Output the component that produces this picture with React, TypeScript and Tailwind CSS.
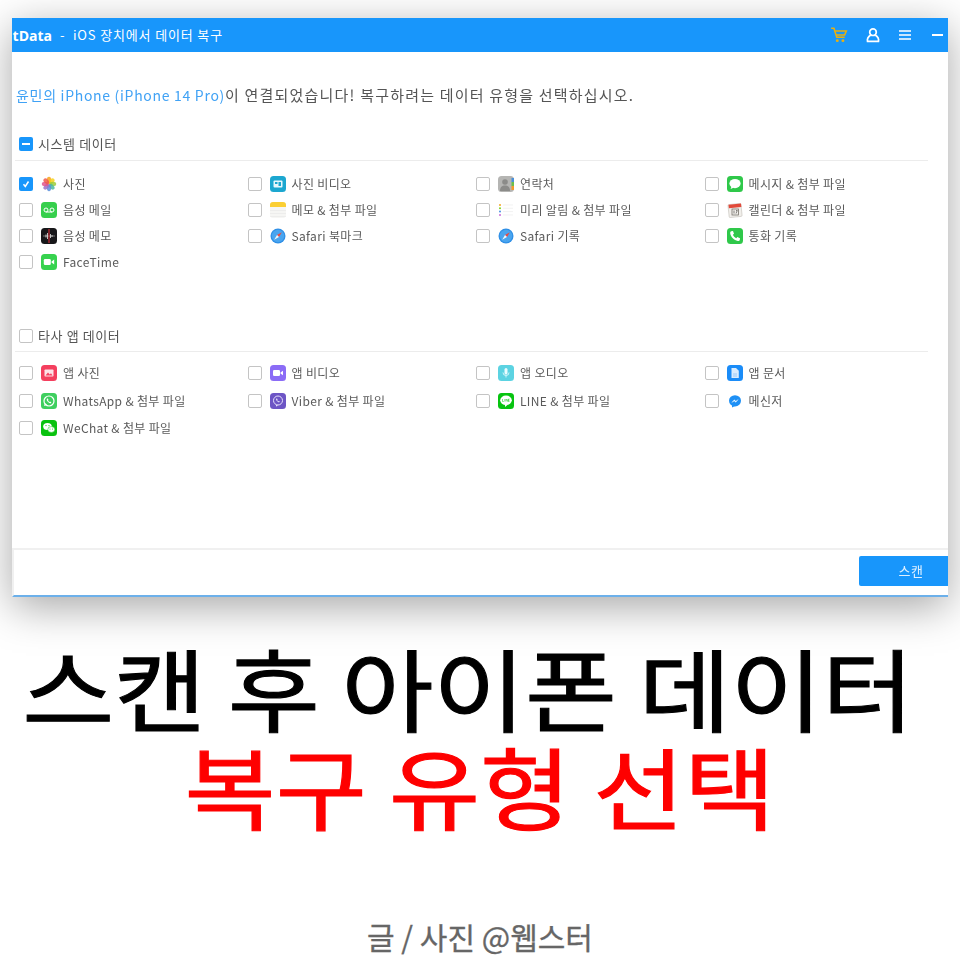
import React from "react";

type IconName =
  | "photos" | "photoVideo" | "contacts" | "messages"
  | "voicemail" | "notes" | "reminders" | "calendar"
  | "voiceMemo" | "safari" | "phone" | "facetime"
  | "appPhoto" | "appVideo" | "appAudio" | "appDoc"
  | "whatsapp" | "viber" | "line" | "messenger" | "wechat";

const AppIcon: React.FC<{ name: IconName }> = ({ name }) => {
  const tile = (fill: string) => <rect x="0" y="0" width="16" height="16" rx="3.5" fill={fill} />;
  let body: React.ReactNode = null;
  switch (name) {
    case "photos":
      body = (
        <g>
          {[
            ["#f9a11b", 0], ["#f7d21c", 45], ["#9ccb3b", 90], ["#4cb8a0", 135],
            ["#5a8fdc", 180], ["#9b72c8", 225], ["#e2558d", 270], ["#ef5b4c", 315],
          ].map(([c, a]) => (
            <ellipse key={String(a)} cx="8" cy="4.2" rx="2.2" ry="3.4" fill={String(c)} opacity="0.85" transform={`rotate(${a} 8 8)`} />
          ))}
        </g>
      );
      break;
    case "photoVideo":
      body = (
        <g>
          {tile("#1ca7d0")}
          <rect x="3.5" y="4.5" width="9" height="7" rx="1" fill="#e6f7fc" />
          <rect x="5" y="6" width="2.5" height="2" fill="#1ca7d0" />
          <rect x="8.5" y="6" width="2.5" height="4" fill="#1ca7d0" />
        </g>
      );
      break;
    case "contacts":
      body = (
        <g>
          {tile("#b5b5b3")}
          <circle cx="7" cy="6" r="2.8" fill="#8b8b89" />
          <path d="M2 15c0-4 2-5.5 5-5.5s5 1.500 5 5.500z" fill="#8b8b89" />
          <rect x="13.500" y="2" width="2.500" height="4" fill="#4a90d9" />
          <rect x="13.500" y="6" width="2.500" height="4" fill="#6cbf4b" />
          <rect x="13.500" y="10" width="2.500" height="4" fill="#f29a2e" />
        </g>
      );
      break;
    case "messages":
      body = (
        <g>
          {tile("#2fc84a")}
          <ellipse cx="8" cy="7.600" rx="5.600" ry="4.600" fill="#fff" />
          <path d="M4.500 10.500 L3.600 13 L7 11.600z" fill="#fff" />
        </g>
      );
      break;
    case "voicemail":
      body = (
        <g>
          {tile("#36cf4c")}
          <circle cx="5" cy="8" r="2" fill="none" stroke="#fff" strokeWidth="1" />
          <circle cx="11" cy="8" r="2" fill="none" stroke="#fff" strokeWidth="1" />
          <path d="M5 10h6" stroke="#fff" strokeWidth="1" />
        </g>
      );
      break;
    case "notes":
      body = (
        <g>
          <rect x="0" y="0" width="16" height="16" rx="3" fill="#f6f6f4" />
          <path d="M0 5V3a3 3 0 0 1 3-3h10a3 3 0 0 1 3 3v2z" fill="#fbcf33" />
          <path d="M0 8.500h16M0 11.500h16M0 14.500h16" stroke="#e4e4e4" strokeWidth="0.500" />
        </g>
      );
      break;
    case "reminders":
      body = (
        <g>
          <rect x="0" y="0" width="16" height="16" fill="#fff" />
          <circle cx="2" cy="3" r="1" fill="#f5a623" />
          <circle cx="2" cy="6.300" r="1" fill="#7ed321" />
          <circle cx="2" cy="9.600" r="1" fill="#4a90e2" />
          <circle cx="2" cy="13" r="1" fill="#c86dd7" />
          <path d="M5 3h10M5 6.300h10M5 9.600h10M5 13h10" stroke="#ececec" strokeWidth="0.700" />
        </g>
      );
      break;
    case "calendar":
      body = (
        <g>
          <rect x="1.500" y="2" width="13" height="13" rx="1" fill="#f1efeb" stroke="#b9b5ae" strokeWidth="0.500" transform="rotate(-6 8 8)" />
          <path d="M1.500 2.800 L14 1.500 L14.400 5 L1.900 6.300z" fill="#e24a3b" />
          <rect x="5" y="7" width="6.500" height="6" fill="none" stroke="#77736c" strokeWidth="0.800" />
          <path d="M7 8.500v3M9 8.500h1.300L9 11.500" stroke="#55524d" strokeWidth="0.700" fill="none" />
        </g>
      );
      break;
    case "voiceMemo":
      body = (
        <g>
          {tile("#17171a")}
          <path d="M2 8h12" stroke="#777" strokeWidth="1" />
          <path d="M5 6.500v3M6.500 5v6M9.500 6v4M11 7v2" stroke="#e8e8e8" strokeWidth="0.800" />
          <path d="M8 1v14" stroke="#e8303a" strokeWidth="1" />
        </g>
      );
      break;
    case "safari":
      body = (
        <g>
          <circle cx="8" cy="8" r="7.500" fill="#2f8fe6" />
          <circle cx="8" cy="8" r="6.200" fill="#4aa5ef" />
          <path d="M11.800 4.200 L9 9 L7 7z" fill="#f0483e" />
          <path d="M4.200 11.800 L7 7 L9 9z" fill="#f4f6f8" />
        </g>
      );
      break;
    case "phone":
      body = (
        <g>
          {tile("#2fc84a")}
          <path d="M4.300 3.200 L6 3 L7 5.800 L5.900 6.800 C6.500 8.300 7.700 9.600 9.300 10.200 L10.300 9.100 L13 10.200 L12.800 11.900 C12.500 12.700 11.600 13 10.800 12.900 C7 12.200 3.900 9.100 3.200 5.300 C3.100 4.400 3.500 3.600 4.300 3.200z" fill="#fff" />
        </g>
      );
      break;
    case "facetime":
      body = (
        <g>
          {tile("#37d24e")}
          <rect x="2.800" y="5" width="7" height="6" rx="1.300" fill="#fff" />
          <path d="M10.500 7.500 L13.200 5.500v5 L10.500 8.500z" fill="#fff" />
        </g>
      );
      break;
    case "appPhoto":
      body = (
        <g>
          {tile("#f43f5e")}
          <rect x="3.500" y="4.500" width="9" height="7" rx="0.800" fill="#fde2e7" />
          <path d="M4.500 10.500 L7 7.500 L8.800 9.500 L10 8.300 L11.500 10.500z" fill="#f43f5e" />
        </g>
      );
      break;
    case "appVideo":
      body = (
        <g>
          {tile("#8b6cf6")}
          <rect x="3" y="5" width="7" height="6" rx="1.300" fill="#fff" />
          <path d="M10.500 7.500 L13 5.800v4.400 L10.500 8.500z" fill="#fff" />
        </g>
      );
      break;
    case "appAudio":
      body = (
        <g>
          {tile("#5cd3e2")}
          <rect x="6.500" y="3" width="3" height="6.500" rx="1.500" fill="#eafcff" />
          <path d="M5 7.500a3 3 0 0 0 6 0M8 10.500v2" stroke="#eafcff" strokeWidth="0.800" fill="none" />
        </g>
      );
      break;
    case "appDoc":
      body = (
        <g>
          {tile("#1a8cf8")}
          <path d="M4.500 3h4.500l2.800 2.800V13h-7.300z" fill="#d9ecfe" />
          <path d="M6 9h4M6 11h4" stroke="#8cc3f9" strokeWidth="0.800" />
        </g>
      );
      break;
    case "whatsapp":
      body = (
        <g>
          {tile("#3fcf5f")}
          <circle cx="8" cy="8" r="5" fill="none" stroke="#fff" strokeWidth="1.200" />
          <path d="M3 13 L3.900 10 L6 12z" fill="#fff" />
          <path d="M6.200 5.600c-.7.600-.6 1.600.2 2.700s1.900 1.900 2.800 1.900c.7 0 1.100-.5 1.100-1l-1.300-.7-.6.500c-.6-.3-1.100-.8-1.400-1.400l.5-.6-.7-1.400z" fill="#fff" />
        </g>
      );
      break;
    case "viber":
      body = (
        <g>
          {tile("#6d55c5")}
          <circle cx="8" cy="7.500" r="4.500" fill="none" stroke="#e6e0fa" strokeWidth="1" />
          <path d="M6 12 L6 13.800 L8 12z" fill="#e6e0fa" />
          <path d="M6.300 5.500c-.5.500-.3 1.400.4 2.300s1.500 1.500 2.200 1.500c.6 0 .9-.4.900-.8l-1-.6-.5.400c-.5-.2-.9-.7-1.100-1.100l.4-.5-.5-1.200z" fill="#e6e0fa" />
        </g>
      );
      break;
    case "line":
      body = (
        <g>
          {tile("#07c410")}
          <ellipse cx="8" cy="7.300" rx="5.800" ry="4.800" fill="#fff" />
          <path d="M7 11.500 L7 14 L10 11.500z" fill="#fff" />
          <path d="M4.500 6v2.500h1.300M6.800 6v2.500M8 8.500V6l1.800 2.500V6M11.500 6h-1v2.500h1M10.500 7.200h1" stroke="#07c410" strokeWidth="0.500" fill="none" />
        </g>
      );
      break;
    case "messenger":
      body = (
        <g>
          <ellipse cx="8" cy="7.800" rx="6" ry="5.600" fill="#1e90f5" />
          <path d="M5 12 L5 14.500 L8 13z" fill="#1e90f5" />
          <path d="M4.800 9.500 L7.300 6.800 L8.800 8.200 L11.200 6.500 L8.800 9.300 L7.200 7.900z" fill="#fff" stroke="#fff" strokeWidth="0.300" />
        </g>
      );
      break;
    case "wechat":
      body = (
        <g>
          {tile("#09c20f")}
          <ellipse cx="6.500" cy="6.500" rx="4.300" ry="3.500" fill="#fff" />
          <ellipse cx="10.300" cy="9.500" rx="3.500" ry="2.900" fill="#fff" stroke="#09c20f" strokeWidth="0.500" />
          <circle cx="5" cy="5.600" r="0.600" fill="#09c20f" />
          <circle cx="8" cy="5.600" r="0.600" fill="#09c20f" />
          <circle cx="9" cy="9" r="0.500" fill="#09c20f" />
          <circle cx="11.500" cy="9" r="0.500" fill="#09c20f" />
        </g>
      );
      break;
  }
  return (
    <svg width="16" height="16" viewBox="0 0 16 16" className="shrink-0">
      {body}
    </svg>
  );
};

const Check: React.FC<{ state?: "off" | "on" | "mixed" }> = ({ state = "off" }) => {
  if (state === "off") {
    return <span className="block w-[14px] h-[14px] shrink-0 rounded-[2px] border border-[#c4c4c4] bg-white" />;
  }
  return (
    <span className="flex items-center justify-center w-[14px] h-[14px] shrink-0 rounded-[2px] bg-[#1896fb]">
      {state === "on" ? (
        <svg width="10" height="10" viewBox="0 0 10 10">
          <path d="M2.500 5.300 L4.300 7.500 L7.500 2.500" stroke="#fff" strokeWidth="1.500" fill="none" />
        </svg>
      ) : (
        <span className="block w-[8px] h-[2px] bg-white" />
      )}
    </span>
  );
};

type Item = { icon: IconName; label: string; checked?: boolean };

const systemItems: Item[] = [
  { icon: "photos", label: "사진", checked: true },
  { icon: "photoVideo", label: "사진 비디오" },
  { icon: "contacts", label: "연락처" },
  { icon: "messages", label: "메시지 & 첨부 파일" },
  { icon: "voicemail", label: "음성 메일" },
  { icon: "notes", label: "메모 & 첨부 파일" },
  { icon: "reminders", label: "미리 알림 & 첨부 파일" },
  { icon: "calendar", label: "캘린더 & 첨부 파일" },
  { icon: "voiceMemo", label: "음성 메모" },
  { icon: "safari", label: "Safari 북마크" },
  { icon: "safari", label: "Safari 기록" },
  { icon: "phone", label: "통화 기록" },
  { icon: "facetime", label: "FaceTime" },
];

const appItems: Item[] = [
  { icon: "appPhoto", label: "앱 사진" },
  { icon: "appVideo", label: "앱 비디오" },
  { icon: "appAudio", label: "앱 오디오" },
  { icon: "appDoc", label: "앱 문서" },
  { icon: "whatsapp", label: "WhatsApp & 첨부 파일" },
  { icon: "viber", label: "Viber & 첨부 파일" },
  { icon: "line", label: "LINE & 첨부 파일" },
  { icon: "messenger", label: "메신저" },
  { icon: "wechat", label: "WeChat & 첨부 파일" },
];

const ItemGrid: React.FC<{ items: Item[]; rowClass: string }> = ({ items, rowClass }) => (
  <div className={`grid grid-cols-[228.500px_228.500px_228.500px_1fr] pl-[7px] ${rowClass}`}>
    {items.map((item) => (
      <div key={item.icon + item.label} className="flex items-center h-[16px]">
        <Check state={item.checked ? "on" : "off"} />
        <span className="ml-[8px]">
          <AppIcon name={item.icon} />
        </span>
        <span className="ml-[6px] text-[12px] text-[#5a5a5a] tracking-[0.35px] whitespace-nowrap">{item.label}</span>
      </div>
    ))}
  </div>
);

const App: React.FC = () => {
  return (
    <div className="w-[960px] h-[960px] bg-white overflow-hidden flex flex-col items-center font-['Noto_Sans_CJK_KR','Noto_Sans',sans-serif]">
      <div className="mt-[18px] w-[936px] h-[579px] shrink-0 flex flex-col bg-white shadow-[0_10px_40px_rgba(0,0,0,0.35)] blur-[0.6px]">
        {/* title bar */}
        <div className="h-[34px] shrink-0 bg-[#1896fb] flex items-center text-white overflow-hidden">
          <span className="text-[14px] font-bold whitespace-nowrap w-[40px] flex justify-end overflow-hidden font-['Open_Sans',sans-serif]">tData</span>
          <span className="ml-[8px] text-[13px] tracking-[0.85px] whitespace-nowrap">-&nbsp; iOS 장치에서 데이터 복구</span>
          <div className="ml-auto flex items-center">
            <svg width="18" height="18" viewBox="0 0 16 16" className="mr-[17px]">
              <path d="M1 2h2.500l2.500 8h7M4 4.500h10.500L13 8H5" stroke="#e8b010" strokeWidth="1.400" fill="none" />
              <circle cx="6.500" cy="13" r="1.300" fill="#e8b010" />
              <circle cx="11.500" cy="13" r="1.300" fill="#e8b010" />
            </svg>
            <svg width="16" height="16" viewBox="0 0 16 16" className="mr-[18px]">
              <circle cx="8" cy="5.200" r="3.300" stroke="#fff" strokeWidth="1.700" fill="none" />
              <path d="M5.800 8 C3.500 9.500 2 12 2.500 14.300 H13.500 C14 12 12.500 9.500 10.200 8" stroke="#fff" strokeWidth="1.700" fill="none" />
            </svg>
            <svg width="12" height="10" viewBox="0 0 12 10" className="mr-[21px]">
              <path d="M0 1h12M0 5h12M0 9h12" stroke="#fff" strokeWidth="1.400" />
            </svg>
            <span className="block w-[11px] h-[2px] bg-white mr-[5px]" />
          </div>
        </div>

        {/* content */}
        <div className="flex-1 flex flex-col">
          <p className="mt-[33px] ml-[4px] text-[15px] leading-[20px] text-[#555] tracking-[1.2px] whitespace-nowrap">
            <span className="text-[14px] tracking-[0.7px] text-[#40a2f5]">윤민의 iPhone (iPhone 14 Pro)</span>이 연결되었습니다! 복구하려는 데이터 유형을 선택하십시오.
          </p>

          <div className="mt-[31px] ml-[3px] mr-[20px] border-b border-[#ececec] h-[25px] flex items-start pl-[4px]">
            <div className="flex items-center h-[16px]">
              <Check state="mixed" />
              <span className="ml-[5px] text-[13px] text-[#555] tracking-[0.6px]">시스템 데이터</span>
            </div>
          </div>
          <ItemGrid items={systemItems} rowClass="mt-[15px] gap-y-[10px]" />

          <div className="mt-[58px] ml-[3px] mr-[20px] border-b border-[#ececec] h-[24px] flex items-start pl-[4px]">
            <div className="flex items-center h-[16px]">
              <Check />
              <span className="ml-[5px] text-[13px] text-[#555] tracking-[0.6px]">타사 앱 데이터</span>
            </div>
          </div>
          <ItemGrid items={appItems} rowClass="mt-[13px] gap-y-[11.500px]" />
        </div>

        {/* footer */}
        <div className="h-[49px] shrink-0 flex justify-end items-start border-t-2 border-l-2 border-[#f0f0f0] border-b-2 border-b-[#6cb0ea] pt-[6px]">
          <div className="w-[89px] h-[30px] bg-[#1896fb] rounded-l-[2px] flex items-center justify-center pl-[15px] text-[#dff0ff] text-[13px] tracking-[0.5px]">스캔</div>
        </div>
      </div>

      <div className="mt-[39px] pr-[24px] text-[100px] leading-[100px] tracking-[-0.3px] scale-y-[0.9] [-webkit-text-stroke:1.200px_#000] text-black whitespace-nowrap">스캔 후 아이폰 데이터</div>
      <div className="-mt-[2px] text-[99px] leading-[100px] scale-y-[0.9] [-webkit-text-stroke:1.200px_#fe0000] text-[#fe0000] whitespace-nowrap">복구 유형 선택</div>
      <div className="mt-[82px] text-[30px] leading-[40px] [-webkit-text-stroke:0.3px_#666] text-[#666] whitespace-nowrap">글 / 사진 @웹스터</div>
    </div>
  );
};

export default App;
